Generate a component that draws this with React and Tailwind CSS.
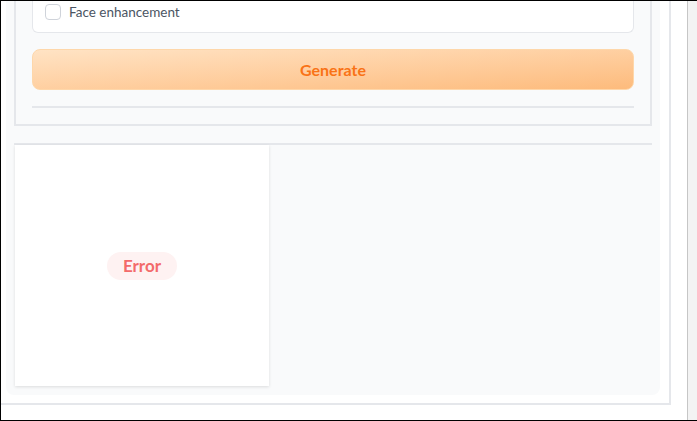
export default function App() {
  return (
    <div
      className="flex h-[421px] w-[697px] overflow-hidden border-y border-l border-black bg-white"
      style={{ fontFamily: 'Lato, "Noto Sans", sans-serif' }}
    >
      <div className="flex-1 overflow-hidden">
        {/* outer frame */}
        <div className="w-[670px] h-[404px] border-r-2 border-b-2 border-[#e5e7eb] pl-[5px] pr-[9px] pb-[8px]">
          {/* column */}
          <div className="h-full rounded-b-lg bg-[#f9fafb] px-2 pb-[9px] flex flex-col">
            {/* options panel */}
            <div className="border-x-2 border-b-2 border-[#e5e7eb] px-4 pb-4 flex flex-col gap-4">
              <div className="h-[32px] rounded-b-md border-x border-b border-[#e5e7eb] bg-white flex items-start pt-[3px] pl-[12px]">
                <span className="w-[16px] h-[16px] rounded-[4px] border border-[#cfd3da] bg-white mr-[8px]" />
                <span className="text-[13.5px] leading-[16px] text-[#4b5563]">Face enhancement</span>
              </div>
              <button className="h-[41px] w-full rounded-lg border border-[#fed7aa] bg-linear-to-br from-[#ffe3c4] to-[#fdbb7c] text-[16px] font-bold text-[#f97316]">
                Generate
              </button>
              <div className="h-[2px] bg-[#e5e7eb]" />
            </div>
            {/* output gallery */}
            <div className="mt-[17px] flex-1 border-t-2 border-[#e5e7eb]">
              <div className="ml-[1px] w-[254px] h-[241px] bg-white shadow-[0_1px_3px_rgba(0,0,0,0.12)] flex items-center justify-center">
                <span className="rounded-full bg-[#fef2f2] px-4 h-[28px] flex items-center text-[17px] font-bold text-[#f36b6b]">
                  Error
                </span>
              </div>
            </div>
          </div>
        </div>
      </div>
      {/* scrollbar track */}
      <div className="w-[10px] border-l border-[#c6c6c6] bg-[#f3f3f3]" />
    </div>
  )
}
